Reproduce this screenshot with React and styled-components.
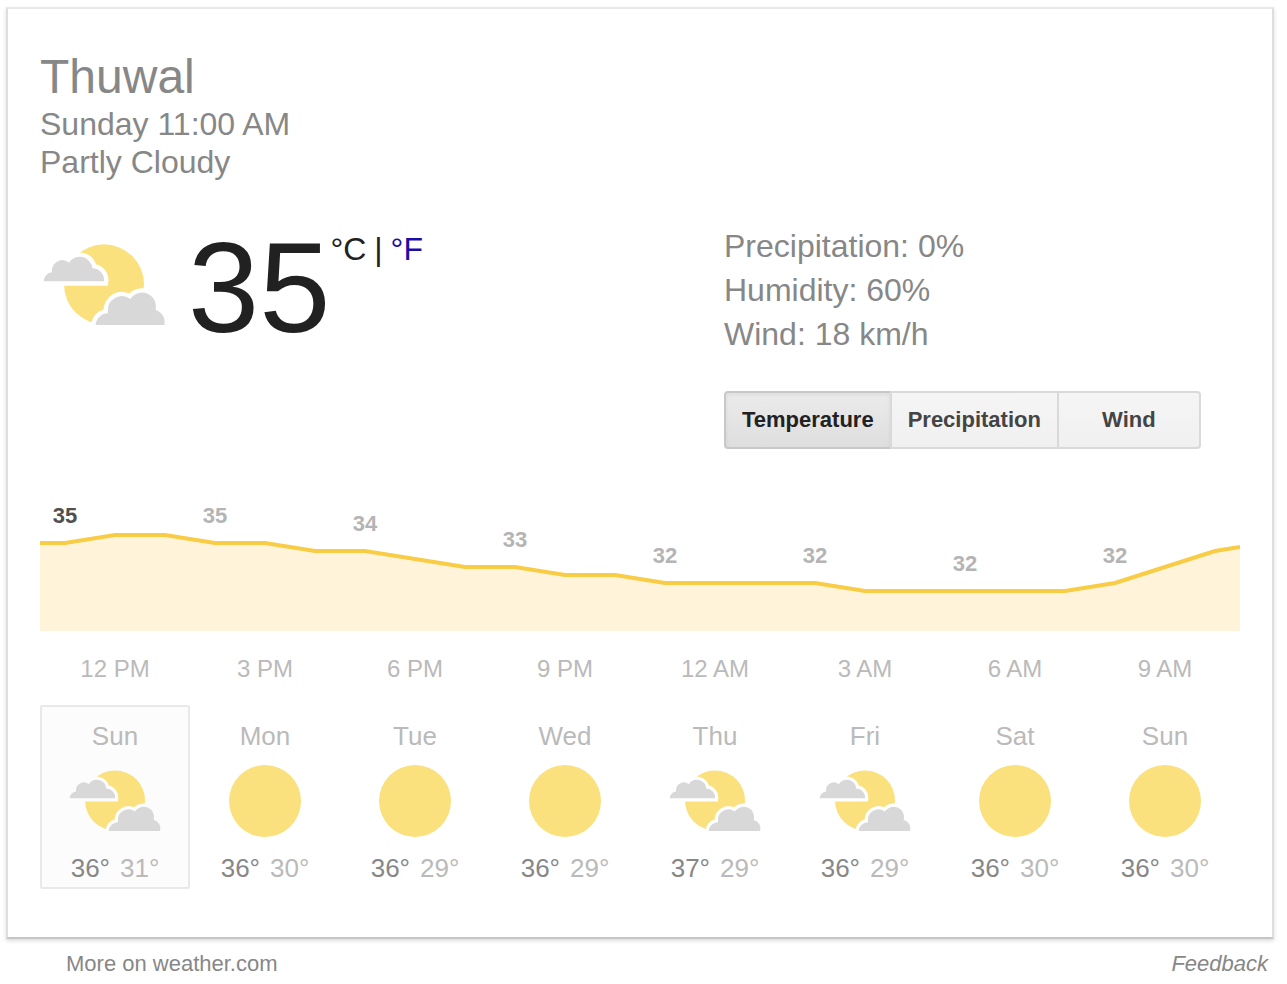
import React, { useId, useState } from "react";
import styled, { createGlobalStyle } from "styled-components";

const GlobalStyle = createGlobalStyle`
  *, *::before, *::after { box-sizing: border-box; }
  body {
    margin: 0;
    background: #fff;
    color: #878787;
    font-family: "Liberation Sans", Arial, sans-serif;
  }
  button { font-family: inherit; cursor: pointer; }
`;

const Page = styled.main`
  padding: 7px 13px 12px 6px;
`;

const Card = styled.section`
  padding: 40px 32px 48px;
  border: 2px solid #dedede;
  border-top-color: #e8e8e8;
  border-bottom-color: #c6c6c6;
  box-shadow: 0 2px 4px rgba(0, 0, 0, 0.14);
`;

const City = styled.h1`
  margin: 0;
  font-size: 48px;
  line-height: 56px;
  font-weight: 400;
`;

const Summary = styled.p`
  margin: 0;
  font-size: 32px;
  line-height: 38px;
`;

const Current = styled.div`
  display: grid;
  grid-template-columns: 57% 1fr;
  margin-top: 43px;
`;

const Reading = styled.div`
  display: flex;
  align-items: flex-start;
  color: #212121;
`;

const CurrentIcon = styled.div`
  display: flex;
  margin: 13px 20px 0 0;
`;

const Degrees = styled.span`
  font-size: 128px;
  line-height: 128px;
`;

const Units = styled.span`
  display: flex;
  gap: 8px;
  font-size: 32px;
  line-height: 50px;
`;

const UnitLink = styled.a`
  color: #1a0dab;
  text-decoration: none;
`;

const Conditions = styled.ul`
  margin: 0 0 35px;
  padding: 0;
  list-style: none;
  font-size: 32px;
  line-height: 44px;
`;

const Tabs = styled.div`
  display: flex;
`;

const Tab = styled.button`
  position: relative;
  z-index: ${(p) => (p.$active ? 0 : 1)};
  min-width: 144px;
  height: 58px;
  padding: 0 16px;
  border: 2px solid ${(p) => (p.$active ? "#c8c8c8" : "#d9d9d9")};
  background: ${(p) =>
    p.$active
      ? "linear-gradient(#ebebeb, #dedede)"
      : "linear-gradient(#f5f5f5, #f0f0f0)"};
  box-shadow: ${(p) => (p.$active ? "inset 0 2px 4px rgba(0, 0, 0, 0.06)" : "none")};
  color: ${(p) => (p.$active ? "#212121" : "#444")};
  font-size: 22px;
  font-weight: 700;

  & + & { margin-left: -2px; }
  &:first-child { border-radius: 4px 0 0 4px; }
  &:last-child { border-radius: 0 4px 4px 0; }
`;

const Chart = styled.svg`
  display: block;
  width: 100%;
  margin-top: 51px;
`;

const PointLabel = styled.text`
  fill: ${(p) => (p.$now ? "#505050" : "#b4b4b4")};
  font-size: 22px;
  font-weight: 700;
  text-anchor: middle;
`;

const Hours = styled.div`
  display: grid;
  grid-template-columns: repeat(8, 1fr);
  padding: 24px 0 22px;
  color: #bababa;
  font-size: 24px;
  line-height: 28px;
  text-align: center;
`;

const Days = styled.div`
  display: grid;
  grid-template-columns: repeat(8, 1fr);
`;

const Day = styled.button`
  display: flex;
  flex-direction: column;
  align-items: center;
  padding: 14px 0 4px;
  border: 2px solid ${(p) => (p.$active ? "#e9e9e9" : "transparent")};
  border-radius: 2px;
  background: ${(p) => (p.$active ? "#fcfcfc" : "transparent")};
  color: #bababa;
  font-size: 26px;
  line-height: 30px;

  svg { margin: 14px 0 16px; }
`;

const Range = styled.span`
  display: flex;
  gap: 10px;
`;

const High = styled.span`
  color: #878787;
`;

const Footer = styled.footer`
  display: flex;
  justify-content: space-between;
  margin-top: 12px;
  padding: 0 6px 0 60px;
  font-size: 22px;
  line-height: 26px;
`;

const FooterLink = styled.a`
  color: #878787;
  font-style: ${(p) => (p.$italic ? "italic" : "normal")};
  text-decoration: none;
`;

const BACK_CLOUD =
  "M41 154 A27 27 0 0 1 66 127 L66 122 A31 31 0 0 1 117 98 A38 38 0 0 1 187 115 A35 35 0 0 1 222 154 Z";
const FRONT_CLOUD =
  "M197 285 A37 37 0 0 1 234 250 L234 245 A42 42 0 0 1 301 207 A42 42 0 0 1 377 240 A38 38 0 0 1 403 285 Z";

function PartlyCloudy({ width, height }) {
  const mask = useId();
  return (
    <svg width={width} height={height} viewBox="30 21 384 288" role="img" aria-label="Partly Cloudy">
      <mask id={mask} maskUnits="userSpaceOnUse" x="30" y="21" width="384" height="288">
        <rect x="30" y="21" width="384" height="288" fill="#fff" />
        <g fill="#000" stroke="#000" strokeWidth="26">
          <path d={BACK_CLOUD} />
          <path d={FRONT_CLOUD} />
        </g>
      </mask>
      <circle cx="222" cy="163" r="120" fill="#fae17d" mask={`url(#${mask})`} />
      <path d={BACK_CLOUD} fill="#d8d8d8" />
      <path d={FRONT_CLOUD} fill="#d8d8d8" />
    </svg>
  );
}

function Sunny() {
  return (
    <svg width="96" height="72" viewBox="0 0 96 72" role="img" aria-label="Sunny">
      <circle cx="48" cy="36" r="36" fill="#fae17d" />
    </svg>
  );
}

const points = [
  [0, 43], [25, 43], [75, 35], [125, 35], [175, 43], [225, 43], [275, 51],
  [325, 51], [375, 59], [425, 67], [475, 67], [525, 75], [575, 75], [625, 83],
  [775, 83], [825, 91], [1025, 91], [1075, 83], [1125, 67], [1175, 51], [1200, 47],
];
const line = points.map((p) => p.join(",")).join(" ");

const labels = [
  [25, 23, 35], [175, 23, 35], [325, 31, 34], [475, 47, 33],
  [625, 63, 32], [775, 63, 32], [925, 71, 32], [1075, 63, 32],
];

const hours = ["12 PM", "3 PM", "6 PM", "9 PM", "12 AM", "3 AM", "6 AM", "9 AM"];

const days = [
  ["Sun", true, 36, 31],
  ["Mon", false, 36, 30],
  ["Tue", false, 36, 29],
  ["Wed", false, 36, 29],
  ["Thu", true, 37, 29],
  ["Fri", true, 36, 29],
  ["Sat", false, 36, 30],
  ["Sun", false, 36, 30],
];

export default function App() {
  const [tab, setTab] = useState("Temperature");
  const [day, setDay] = useState(0);

  return (
    <Page>
      <GlobalStyle />
      <Card>
        <City>Thuwal</City>
        <Summary>Sunday 11:00 AM</Summary>
        <Summary>Partly Cloudy</Summary>

        <Current>
          <Reading>
            <CurrentIcon>
              <PartlyCloudy width={128} height={96} />
            </CurrentIcon>
            <Degrees>35</Degrees>
            <Units>
              <span>°C</span>
              <span>|</span>
              <UnitLink href="#fahrenheit">°F</UnitLink>
            </Units>
          </Reading>
          <div>
            <Conditions>
              <li>Precipitation: 0%</li>
              <li>Humidity: 60%</li>
              <li>Wind: 18 km/h</li>
            </Conditions>
            <Tabs>
              {["Temperature", "Precipitation", "Wind"].map((name) => (
                <Tab key={name} type="button" $active={tab === name} aria-pressed={tab === name} onClick={() => setTab(name)}>
                  {name}
                </Tab>
              ))}
            </Tabs>
          </div>
        </Current>

        <Chart viewBox="0 0 1200 131" role="img" aria-label="Hourly temperature">
          <polygon points={`0,131 ${line} 1200,131`} fill="#fff4da" />
          <polyline points={line} fill="none" stroke="#f8cc45" strokeWidth="4" />
          {labels.map(([x, y, value], i) => (
            <PointLabel key={x} x={x} y={y} $now={i === 0}>
              {value}
            </PointLabel>
          ))}
        </Chart>
        <Hours>
          {hours.map((h) => (
            <span key={h}>{h}</span>
          ))}
        </Hours>

        <Days>
          {days.map(([name, cloudy, high, low], i) => (
            <Day key={i} type="button" $active={day === i} aria-pressed={day === i} onClick={() => setDay(i)}>
              <span>{name}</span>
              {cloudy ? <PartlyCloudy width={96} height={72} /> : <Sunny />}
              <Range>
                <High>{high}°</High>
                <span>{low}°</span>
              </Range>
            </Day>
          ))}
        </Days>
      </Card>
      <Footer>
        <FooterLink href="#more">More on weather.com</FooterLink>
        <FooterLink href="#feedback" $italic>Feedback</FooterLink>
      </Footer>
    </Page>
  );
}
